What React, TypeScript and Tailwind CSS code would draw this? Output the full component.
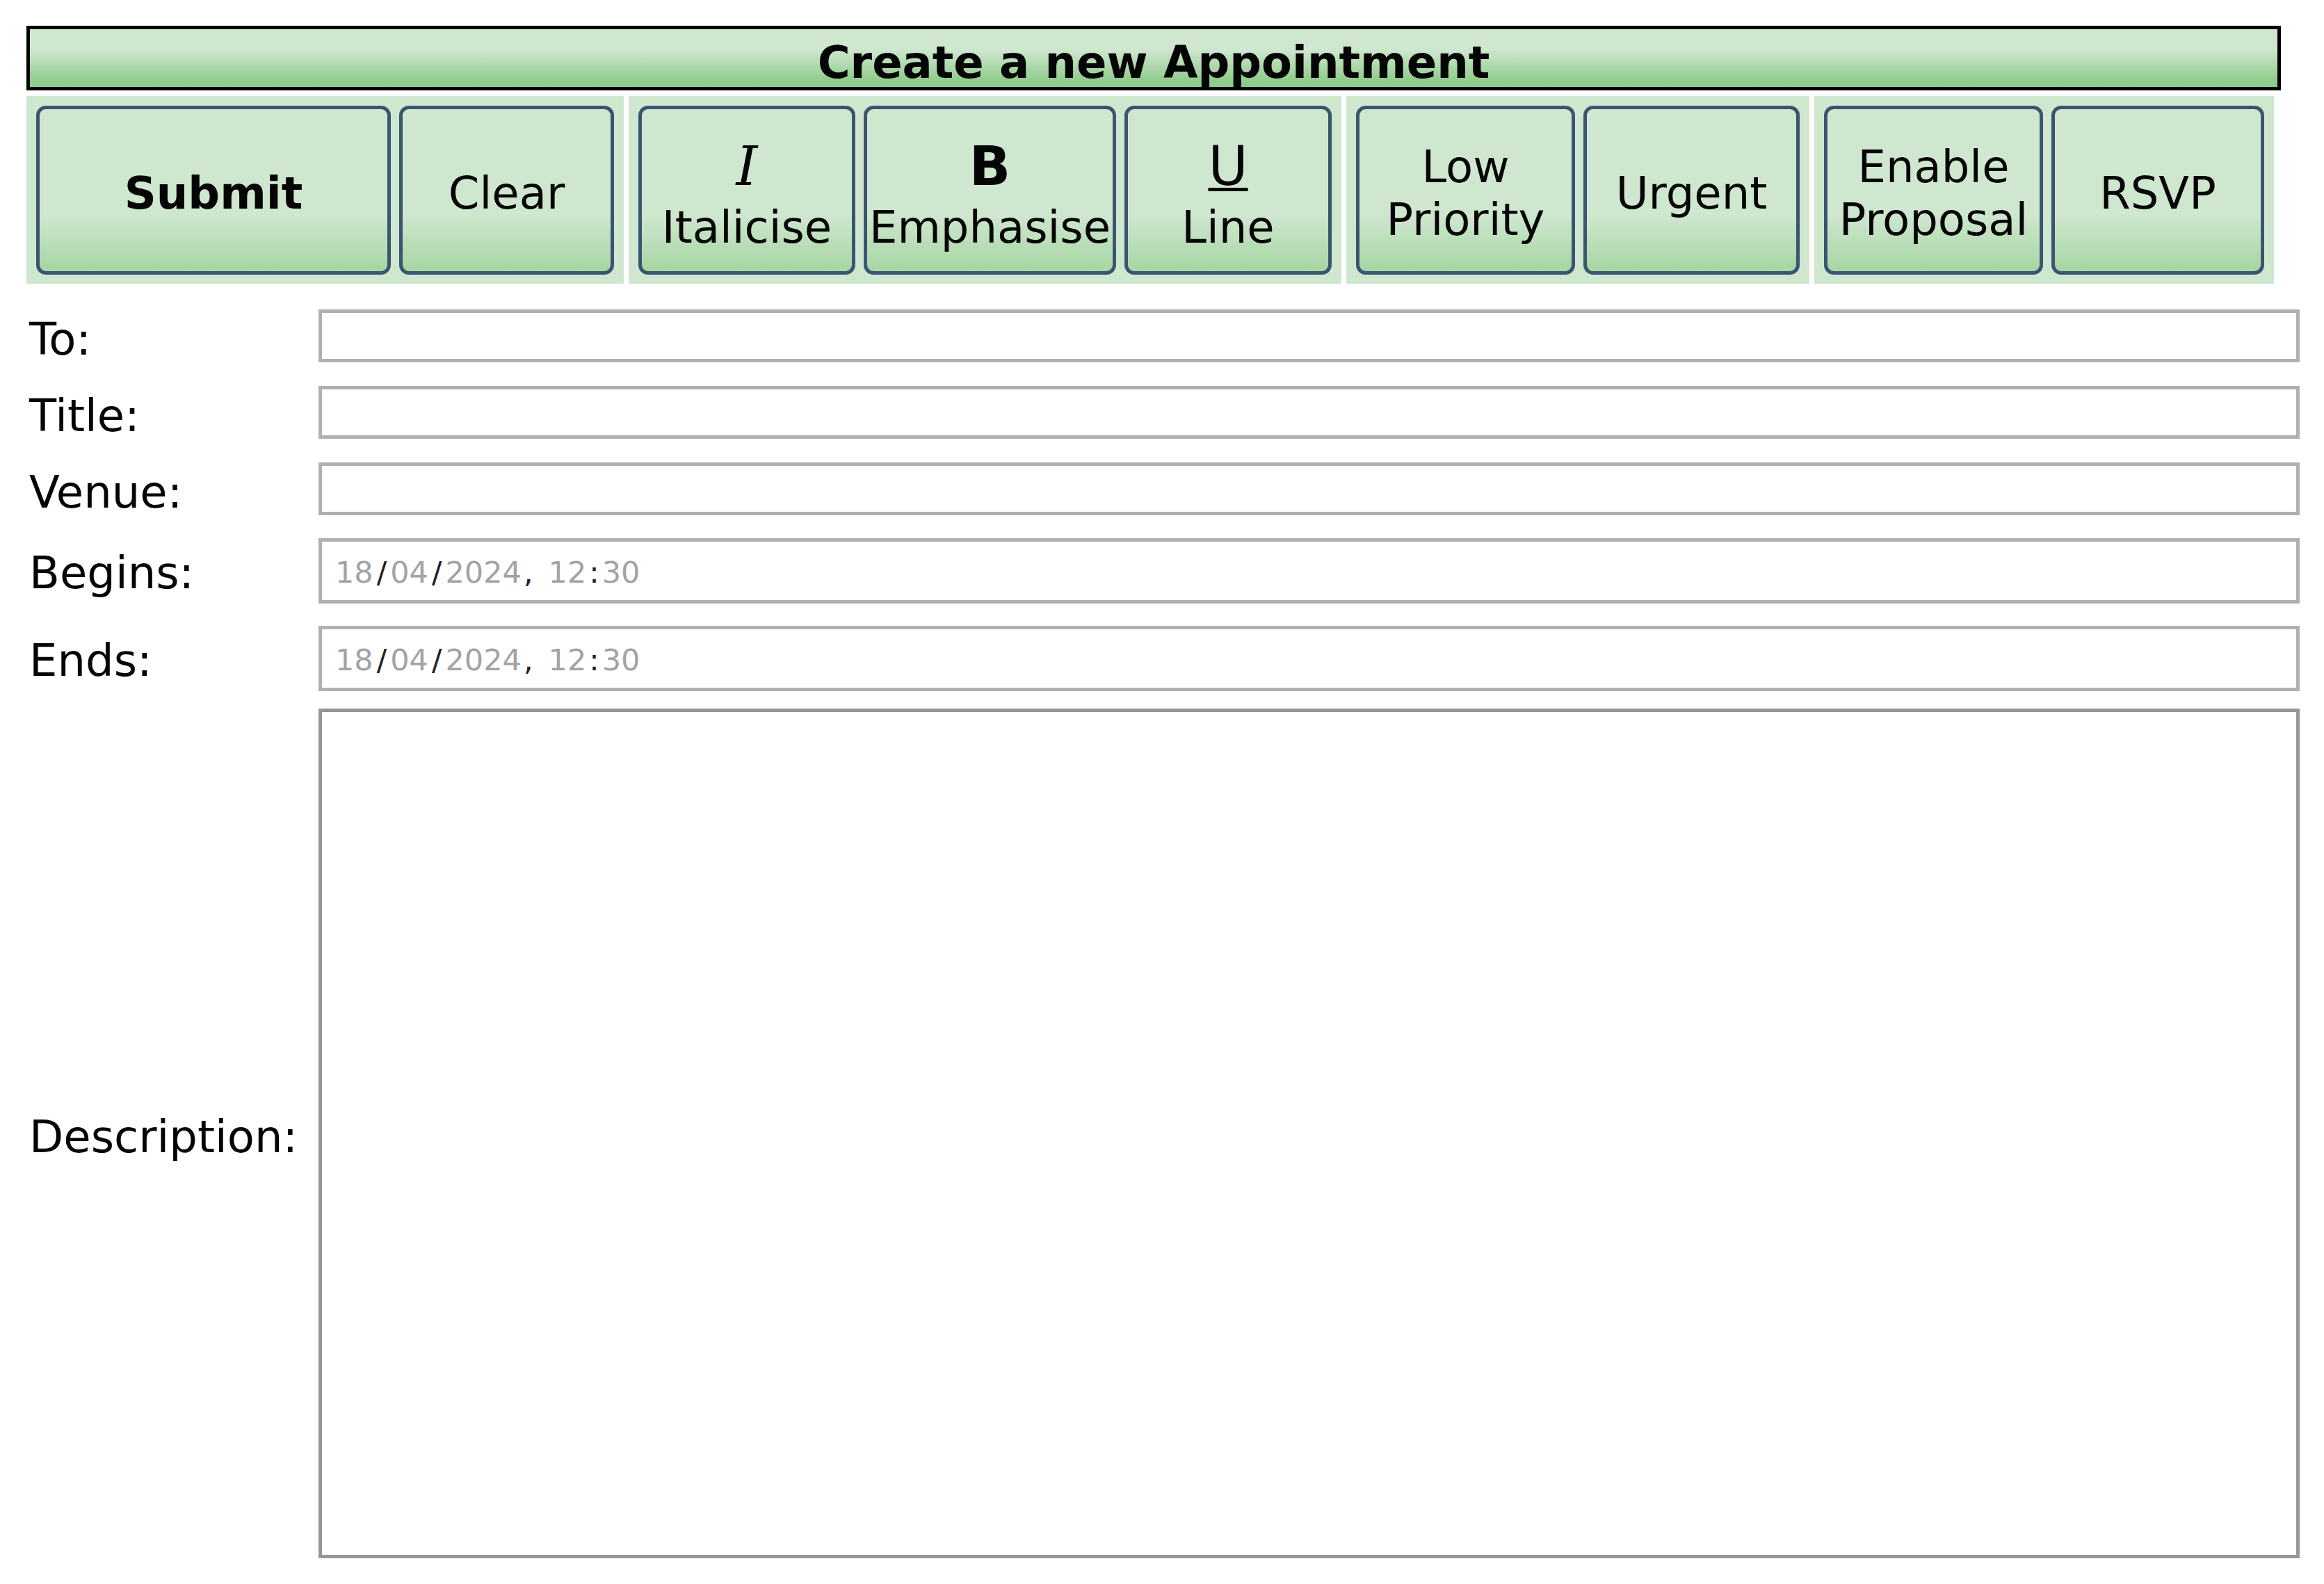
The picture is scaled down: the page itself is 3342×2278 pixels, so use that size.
import React from "react";

const BTN =
  "flex flex-col items-center justify-center h-[243px] shrink-0 rounded-[14px] border-[5px] border-[#3a5570] bg-linear-to-b from-[#cfe7cf] from-65% to-[#a6d5a2] to-100% text-[64px] leading-[76px] text-[#050505] pt-[8px] text-center";

const GROUP = "flex gap-[12px] px-[14px] pt-[14px] pb-[13px] bg-[#cfe7cf]";

const INPUT = "h-[76px] w-[2849px] border-[5px] border-[#b0b0b0] bg-white outline-none";

function DateValue() {
  const dig = "text-[#a3a3a3]";
  const sep = "text-[#222]";
  return (
    <div className="flex items-center h-[94px] w-[2849px] border-[5px] border-[#b0b0b0] pl-[19px] pt-[4px] text-[43px] font-['DejaVu_Sans',sans-serif]">
      <span className={dig}>18</span>
      <span className={`${sep} mx-[5px]`}>/</span>
      <span className={dig}>04</span>
      <span className={`${sep} mx-[5px]`}>/</span>
      <span className={dig}>2024</span>
      <span className={`${sep} ml-[3px] mr-[22px]`}>,</span>
      <span className={dig}>12</span>
      <span className={`${sep} mx-[4px]`}>:</span>
      <span className={dig}>30</span>
    </div>
  );
}

function Row({
  label,
  mt,
  lift = "pt-[10px]",
  children,
}: {
  label: string;
  mt: string;
  lift?: string;
  children: React.ReactNode;
}) {
  return (
    <div className={`flex items-center ${mt}`}>
      <div className={`ml-[4px] w-[416px] shrink-0 ${lift} text-[64px] leading-[64px] text-[#050505]`}>{label}</div>
      {children}
    </div>
  );
}

export default function App() {
  return (
    <div className="min-h-screen bg-white pl-[38px] pt-[37px] font-['DejaVu_Sans','Liberation_Sans',sans-serif]">
      {/* Header */}
      <div className="flex h-[93px] w-[3242px] items-center justify-center border-[5px] border-black bg-linear-to-b from-[#cfe7cf] from-35% to-[#8fcb8b] to-90% pt-[12px] text-[64px] font-bold text-[#050505]">
        Create a new Appointment
      </div>

      {/* Toolbar */}
      <div className="mt-[8px] flex gap-[7px]">
        <div className={GROUP}>
          <button className={`${BTN} w-[510px] font-bold`}>Submit</button>
          <button className={`${BTN} w-[309px]`}>Clear</button>
        </div>
        <div className={GROUP}>
          <button className={`${BTN} w-[312px]`}>
            <span className="text-[78px] leading-[99px] italic font-['DejaVu_Serif',serif]">I</span>
            <span>Italicise</span>
          </button>
          <button className={`${BTN} w-[363px]`}>
            <span className="text-[78px] leading-[99px] font-bold">B</span>
            <span>Emphasise</span>
          </button>
          <button className={`${BTN} w-[298px]`}>
            <span className="text-[78px] leading-[99px] underline decoration-[5px] underline-offset-[4px]">U</span>
            <span>Line</span>
          </button>
        </div>
        <div className={GROUP}>
          <button className={`${BTN} w-[315px]`}>
            <span>Low</span>
            <span>Priority</span>
          </button>
          <button className={`${BTN} w-[311px]`}>Urgent</button>
        </div>
        <div className={GROUP}>
          <button className={`${BTN} w-[315px]`}>
            <span>Enable</span>
            <span>Proposal</span>
          </button>
          <button className={`${BTN} w-[306px]`}>RSVP</button>
        </div>
      </div>

      {/* Form */}
      <Row label="To:" mt="mt-[37px]">
        <input type="text" className={INPUT} />
      </Row>
      <Row label="Title:" mt="mt-[34px]">
        <input type="text" className={INPUT} />
      </Row>
      <Row label="Venue:" mt="mt-[34px]">
        <input type="text" className={INPUT} />
      </Row>
      <Row label="Begins:" mt="mt-[33px]" lift="pt-[5px]">
        <DateValue />
      </Row>
      <Row label="Ends:" mt="mt-[32px]" lift="pt-[5px]">
        <DateValue />
      </Row>
      <Row label="Description:" mt="mt-[25px]">
        <textarea className="h-[1222px] w-[2849px] resize-none border-[5px] border-[#969696] bg-white outline-none" />
      </Row>
    </div>
  );
}
